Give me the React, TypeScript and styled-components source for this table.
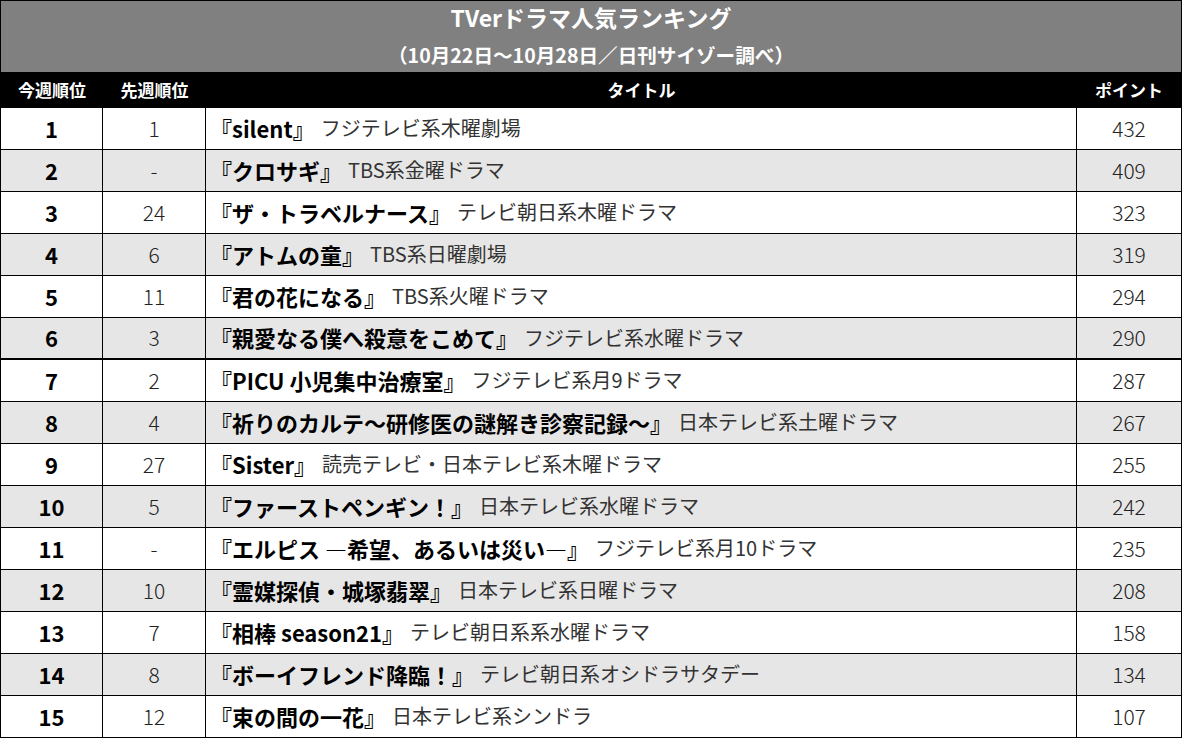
import { createGlobalStyle, styled } from "styled-components";

const GlobalStyle = createGlobalStyle`
    html, body {
        margin: 0;
        padding: 0;
        background: #fff;
    }

    body {
        font-family: "Noto Sans CJK JP", "Noto Sans", sans-serif;
    }
`;

const Board = styled.div`
    width: 1182px;
    border-left: 1px solid #000;
    border-right: 1px solid #000;
    box-sizing: border-box;
`;

const Caption = styled.div`
    height: 72px;
    background: #808080;
    border-top: 1px solid #000;
    box-sizing: border-box;
    display: flex;
    flex-direction: column;
    align-items: center;
    color: #fff;
    font-weight: 700;
`;

const CaptionTitle = styled.div`
    height: 35px;
    line-height: 33px;
    font-size: 23px;
`;

const CaptionSub = styled.div`
    height: 36px;
    padding-top: 3px;
    box-sizing: border-box;
    line-height: 31px;
    font-size: 19.6px;
`;

const COLS = "102px 103px 871px 1fr";

const HeadRow = styled.div`
    display: grid;
    grid-template-columns: ${COLS};
    height: 36px;
    background: #000;
    color: #fff;
    font-size: 17px;
    font-weight: 700;
`;

const HeadCell = styled.div`
    display: flex;
    align-items: center;
    justify-content: center;
    padding-bottom: 1px;
`;

const Row = styled.div<{ $shade: boolean; $thick: boolean }>`
    display: grid;
    grid-template-columns: ${COLS};
    height: 42px;
    box-sizing: border-box;
    background: ${(p) => (p.$shade ? "#e7e6e6" : "#fff")};
    border-bottom: ${(p) => (p.$thick ? "2px" : "1px")} solid #000;
`;

const Cell = styled.div<{ $bold?: boolean; $line?: boolean }>`
    display: flex;
    align-items: center;
    justify-content: center;
    padding-bottom: 2px;
    font-size: ${(p) => (p.$bold ? "22px" : "21px")};
    font-weight: ${(p) => (p.$bold ? 700 : 300)};
    color: ${(p) => (p.$bold ? "#000" : "#222")};
    border-right: ${(p) => (p.$line ? "1px solid #000" : "none")};
`;

const TitleCell = styled.div`
    display: flex;
    align-items: center;
    padding: 0 0 2px 4px;
    border-right: 1px solid #000;
    white-space: nowrap;
`;

const ShowName = styled.span`
    font-size: 22px;
    font-weight: 700;
    color: #000;
`;

const Slot = styled.span`
    margin-left: 6px;
    font-size: 20px;
    font-weight: 400;
    color: #333;
`;

type Entry = { prev: string; title: string; slot: string; pt: number };

const ranking: Entry[] = [
    { prev: "1", title: "『silent』", slot: "フジテレビ系木曜劇場", pt: 432 },
    { prev: "-", title: "『クロサギ』", slot: "TBS系金曜ドラマ", pt: 409 },
    { prev: "24", title: "『ザ・トラベルナース』", slot: "テレビ朝日系木曜ドラマ", pt: 323 },
    { prev: "6", title: "『アトムの童』", slot: "TBS系日曜劇場", pt: 319 },
    { prev: "11", title: "『君の花になる』", slot: "TBS系火曜ドラマ", pt: 294 },
    { prev: "3", title: "『親愛なる僕へ殺意をこめて』", slot: "フジテレビ系水曜ドラマ", pt: 290 },
    { prev: "2", title: "『PICU 小児集中治療室』", slot: "フジテレビ系月9ドラマ", pt: 287 },
    { prev: "4", title: "『祈りのカルテ～研修医の謎解き診察記録～』", slot: "日本テレビ系土曜ドラマ", pt: 267 },
    { prev: "27", title: "『Sister』", slot: "読売テレビ・日本テレビ系木曜ドラマ", pt: 255 },
    { prev: "5", title: "『ファーストペンギン！』", slot: "日本テレビ系水曜ドラマ", pt: 242 },
    { prev: "-", title: "『エルピス ―希望、あるいは災い―』", slot: "フジテレビ系月10ドラマ", pt: 235 },
    { prev: "10", title: "『霊媒探偵・城塚翡翠』", slot: "日本テレビ系日曜ドラマ", pt: 208 },
    { prev: "7", title: "『相棒 season21』", slot: "テレビ朝日系系水曜ドラマ", pt: 158 },
    { prev: "8", title: "『ボーイフレンド降臨！』", slot: "テレビ朝日系オシドラサタデー", pt: 134 },
    { prev: "12", title: "『束の間の一花』", slot: "日本テレビ系シンドラ", pt: 107 },
];

export default function App() {
    return (
        <>
            <GlobalStyle />
            <Board>
                <Caption>
                    <CaptionTitle>TVerドラマ人気ランキング</CaptionTitle>
                    <CaptionSub>（10月22日～10月28日／日刊サイゾー調べ）</CaptionSub>
                </Caption>
                <HeadRow>
                    <HeadCell>今週順位</HeadCell>
                    <HeadCell>先週順位</HeadCell>
                    <HeadCell>タイトル</HeadCell>
                    <HeadCell>ポイント</HeadCell>
                </HeadRow>
                {ranking.map((r, i) => (
                    <Row key={i} $shade={i % 2 === 1} $thick={i === 5}>
                        <Cell $bold $line>{i + 1}</Cell>
                        <Cell $line>{r.prev}</Cell>
                        <TitleCell>
                            <ShowName>{r.title}</ShowName>
                            <Slot>{r.slot}</Slot>
                        </TitleCell>
                        <Cell>{r.pt}</Cell>
                    </Row>
                ))}
            </Board>
        </>
    );
}
